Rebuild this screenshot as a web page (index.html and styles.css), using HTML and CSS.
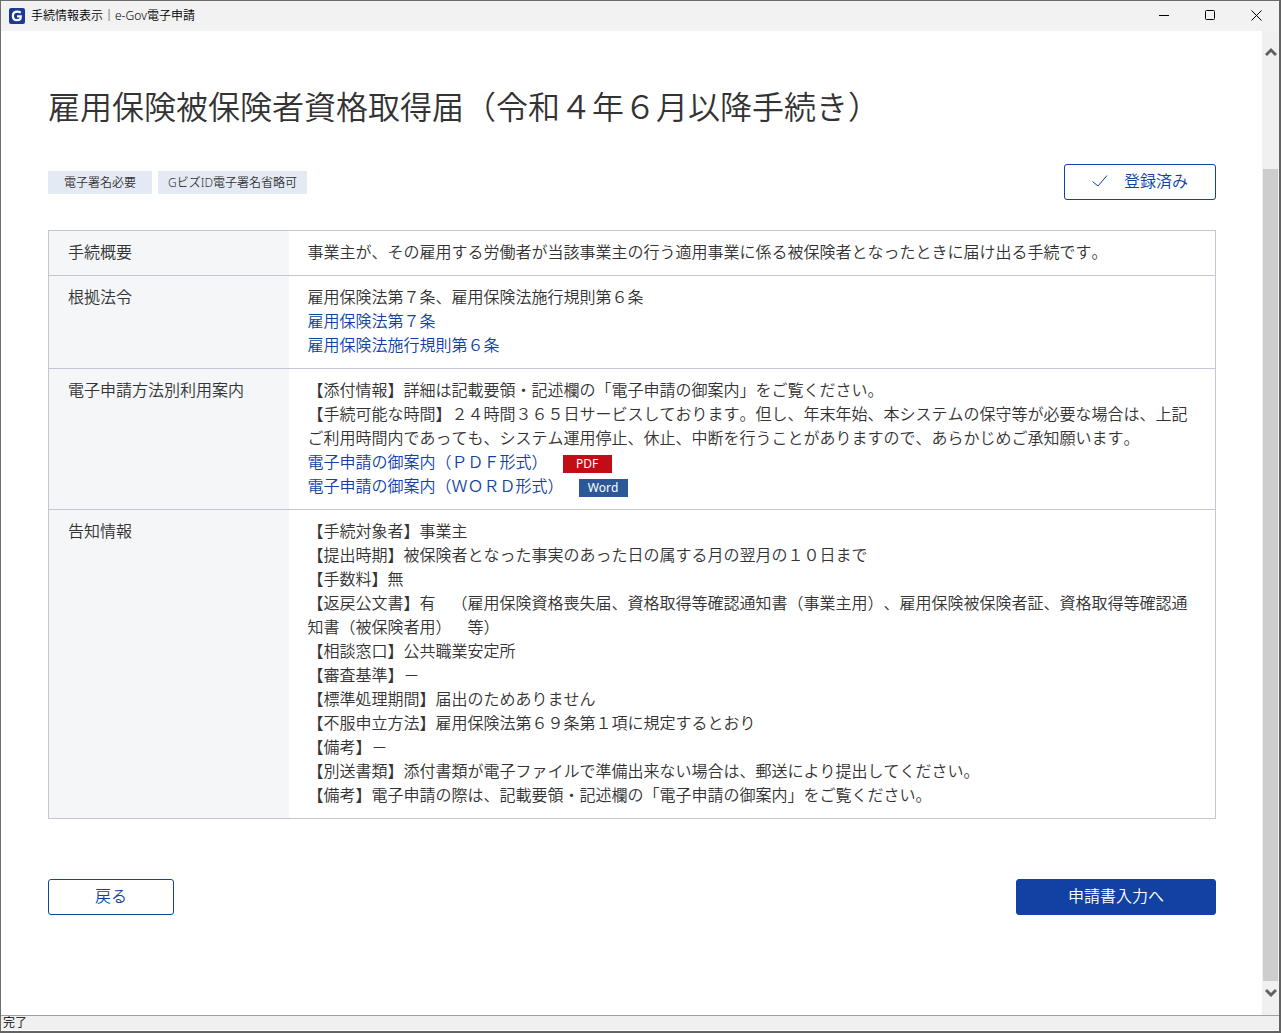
FILE: index.html
```html
<!DOCTYPE html>
<html lang="ja">
    <head>
        <meta charset="UTF-8">
        <title>手続情報表示｜e-Gov電子申請</title>
        <meta name="viewport" content="width=device-width, initial-scale=1">
        <link rel="stylesheet" href="styles.css">
    </head>
    <body>
        <div class="window">
            <header class="title-bar">
                <svg class="app-icon" viewBox="0 0 16 16" aria-hidden="true">
                    <rect width="16" height="16" rx="2" fill="#1a3a94"/>
                    <path d="M11.8 4.6C10.6 3.9 9.6 3.7 8.4 3.7C5.8 3.7 3.9 5.4 3.9 8C3.9 10.6 5.6 12.2 8 12.2C10.4 12.2 11.8 10.8 11.8 8.4H8" fill="none" stroke="#fff" stroke-width="2.2"/>
                </svg>
                <span class="window-title">手続情報表示｜e-Gov電子申請</span>
                <div class="window-controls">
                    <button type="button" aria-label="最小化">
                        <svg width="11" height="11" viewBox="0 0 11 11"><path d="M0 5.5H10" stroke="#000"/></svg>
                    </button>
                    <button type="button" aria-label="最大化">
                        <svg width="11" height="11" viewBox="0 0 11 11"><rect x="0.5" y="0.5" width="9" height="9" rx="1" fill="none" stroke="#000"/></svg>
                    </button>
                    <button type="button" aria-label="閉じる">
                        <svg width="11" height="11" viewBox="0 0 11 11"><path d="M0.5 0.5L10.5 10.5M10.5 0.5L0.5 10.5" stroke="#000"/></svg>
                    </button>
                </div>
            </header>
            <div class="view">
                <main class="page">
                    <h1>雇用保険被保険者資格取得届（令和４年６月以降手続き）</h1>
                    <div class="summary">
                        <ul class="tags">
                            <li>電子署名必要</li>
                            <li>GビズID電子署名省略可</li>
                        </ul>
                        <button type="button" class="btn btn-check">
                            <svg width="16" height="12" viewBox="0 0 16 12" aria-hidden="true"><path d="M0.5 6.5L6 11L15 0.5" fill="none" stroke="#1041a3"/></svg>
                            登録済み
                        </button>
                    </div>
                    <table class="detail">
                        <tr>
                            <th scope="row">手続概要</th>
                            <td>事業主が、その雇用する労働者が当該事業主の行う適用事業に係る被保険者となったときに届け出る手続です。</td>
                        </tr>
                        <tr>
                            <th scope="row">根拠法令</th>
                            <td>
                                雇用保険法第７条、雇用保険法施行規則第６条<br>
                                <a href="#">雇用保険法第７条</a><br>
                                <a href="#">雇用保険法施行規則第６条</a>
                            </td>
                        </tr>
                        <tr>
                            <th scope="row">電子申請方法別利用案内</th>
                            <td>
                                【添付情報】詳細は記載要領・記述欄の「電子申請の御案内」をご覧ください。<br>
                                【手続可能な時間】２４時間３６５日サービスしております。但し、年末年始、本システムの保守等が必要な場合は、上記ご利用時間内であっても、システム運用停止、休止、中断を行うことがありますので、あらかじめご承知願います。
                                <a href="#" class="file">電子申請の御案内（ＰＤＦ形式）<span class="badge pdf">PDF</span></a>
                                <a href="#" class="file">電子申請の御案内（ＷＯＲＤ形式）<span class="badge word">Word</span></a>
                            </td>
                        </tr>
                        <tr>
                            <th scope="row">告知情報</th>
                            <td>
                                【手続対象者】事業主<br>
                                【提出時期】被保険者となった事実のあった日の属する月の翌月の１０日まで<br>
                                【手数料】無<br>
                                【返戻公文書】有　（雇用保険資格喪失届、資格取得等確認通知書（事業主用）、雇用保険被保険者証、資格取得等確認通知書（被保険者用）　等）<br>
                                【相談窓口】公共職業安定所<br>
                                【審査基準】－<br>
                                【標準処理期間】届出のためありません<br>
                                【不服申立方法】雇用保険法第６９条第１項に規定するとおり<br>
                                【備考】－<br>
                                【別送書類】添付書類が電子ファイルで準備出来ない場合は、郵送により提出してください。<br>
                                【備考】電子申請の際は、記載要領・記述欄の「電子申請の御案内」をご覧ください。
                            </td>
                        </tr>
                    </table>
                    <div class="actions">
                        <button type="button" class="btn btn-back">戻る</button>
                        <button type="button" class="btn btn-next">申請書入力へ</button>
                    </div>
                </main>
                <div class="scrollbar">
                    <button type="button" class="arrow arrow-up" aria-label="上へスクロール">
                        <svg width="12" height="10" viewBox="0 0 12 10"><path d="M1 8L6 3L11 8" fill="none" stroke="#606060" stroke-width="3"/></svg>
                    </button>
                    <div class="track"></div>
                    <div class="thumb"></div>
                    <button type="button" class="arrow arrow-down" aria-label="下へスクロール">
                        <svg width="12" height="10" viewBox="0 0 12 10"><path d="M1 2L6 7L11 2" fill="none" stroke="#606060" stroke-width="3"/></svg>
                    </button>
                </div>
            </div>
            <footer class="status-bar">完了</footer>
        </div>
    </body>
</html>
```

FILE: styles.css
```css
*{box-sizing: border-box;}
body{
    margin: 0;
    font-family: "Noto Sans", "Noto Sans CJK JP", sans-serif;
    font-size: 16px;
    font-weight: 350;
    line-height: 24px;
    color: #333;
    font-kerning: none;
    text-spacing-trim: space-all;
}
button{
    margin: 0;
    padding: 0;
    border: 0;
    background: none;
    font: inherit;
    color: inherit;
    cursor: pointer;
}
a{
    color: #1041a3;
    text-decoration: none;
}
a:hover{
    text-decoration: underline;
}
.window{
    display: flex;
    flex-direction: column;
    height: 100vh;
    border: 1px solid #6e6b6e;
    border-right: 2px solid #626262;
    border-bottom: 2px solid #626262;
    background: #fff;
}

/* タイトルバー */
.title-bar{
    display: flex;
    flex: none;
    align-items: center;
    gap: 6px;
    height: 30px;
    padding-left: 8px;
    background: #f2f2f2;
    color: #000;
    font-size: 12px;
}
.app-icon{
    width: 16px;
    height: 16px;
}
.window-controls{
    display: flex;
    height: 100%;
    margin-left: auto;
}
.window-controls button{
    display: flex;
    align-items: center;
    justify-content: center;
    width: 46px;
    padding-bottom: 2px;
}

.view{
    display: flex;
    flex: 1;
    min-height: 0;
}
.page{
    flex: 1;
    padding: 52px 46px 0 47px;
    overflow: hidden;
}
h1{
    margin: 0 0 33px;
    font-size: 32px;
    font-weight: 350;
    line-height: 48px;
}
.summary{
    display: flex;
    align-items: center;
    justify-content: space-between;
    margin-bottom: 30px;
}
.tags{
    display: flex;
    gap: 6px;
    margin: 0;
    padding: 0;
    list-style: none;
}
.tags li{
    min-width: 104px;
    padding: 0 10px;
    background: #e4eaf4;
    font-size: 12px;
    line-height: 23px;
    text-align: center;
}

/* ボタン */
.btn{
    display: flex;
    align-items: center;
    justify-content: center;
    height: 36px;
    padding-bottom: 2px;
    border: 1px solid #1041a3;
    border-radius: 3px;
    background: #fff;
    color: #1041a3;
}
.btn-check{
    gap: 16px;
    width: 152px;
}
.btn-back{
    width: 126px;
}
.btn-next{
    width: 200px;
    background: #1041a3;
    color: #fff;
}

.detail{
    width: 100%;
    border: 1px solid #c5c5d3;
    border-collapse: collapse;
}
.detail tr{
    border-top: 1px solid #c5c5d3;
}
.detail th,
.detail td{
    padding: 9px 20px 11px 19px;
    font-weight: 350;
    text-align: left;
    vertical-align: top;
}
.detail th{
    width: 240px;
    background: #f4f6f8;
    white-space: nowrap;
}
.file{
    display: flex;
    align-items: center;
    gap: 15px;
}
.badge{
    width: 49px;
    margin-top: 4px;
    color: #fff;
    font-size: 12px;
    font-weight: 400;
    line-height: 18px;
    text-align: center;
}
.pdf{
    background: #c30d16;
}
.word{
    background: #2c5898;
}
.actions{
    display: flex;
    justify-content: space-between;
    margin-top: 60px;
}

/* スクロールバー */
.scrollbar{
    display: flex;
    flex: none;
    flex-direction: column;
    width: 17px;
    padding: 0 1px;
    background: #f0f0f0;
}
.arrow{
    display: flex;
    flex: none;
    align-items: center;
    justify-content: center;
    height: 42px;
}
.arrow-down{
    height: 34px;
    padding-bottom: 10px;
}
.track{
    flex: 96;
}
.thumb{
    flex: 812;
    background: #cdcdcd;
}

.status-bar{
    flex: none;
    height: 16px;
    padding-left: 2px;
    border-top: 1px solid #a0a0a0;
    border-bottom: 1px solid #fff;
    background: #f0f0f0;
    color: #000;
    font-size: 12px;
    line-height: 14px;
}
```
